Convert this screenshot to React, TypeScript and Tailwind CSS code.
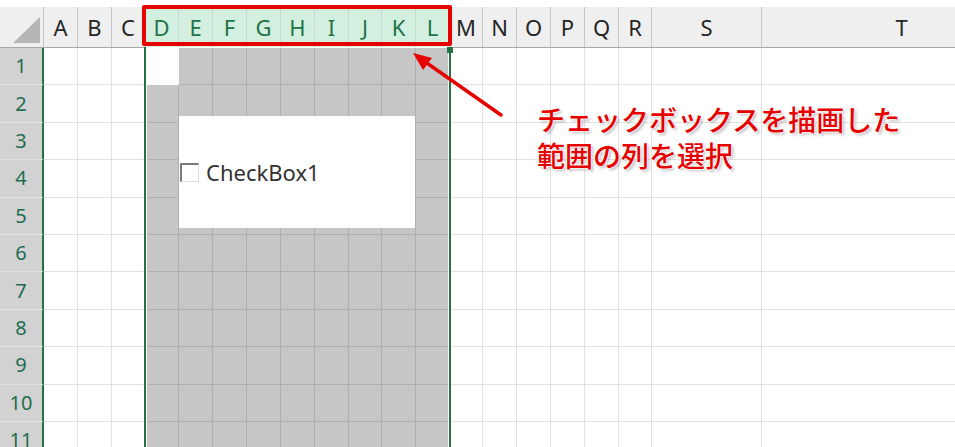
import React from "react";

const COLS: { label: string; w: string; sel: boolean }[] = [
  { label: "A", w: "w-[34px]", sel: false },
  { label: "B", w: "w-[34px]", sel: false },
  { label: "C", w: "w-[33px]", sel: false },
  { label: "D", w: "w-[34px]", sel: true },
  { label: "E", w: "w-[34px]", sel: true },
  { label: "F", w: "w-[34px]", sel: true },
  { label: "G", w: "w-[34px]", sel: true },
  { label: "H", w: "w-[34px]", sel: true },
  { label: "I", w: "w-[34px]", sel: true },
  { label: "J", w: "w-[33px]", sel: true },
  { label: "K", w: "w-[34px]", sel: true },
  { label: "L", w: "w-[34px]", sel: true },
  { label: "M", w: "w-[33px]", sel: false },
  { label: "N", w: "w-[34px]", sel: false },
  { label: "O", w: "w-[34px]", sel: false },
  { label: "P", w: "w-[34px]", sel: false },
  { label: "Q", w: "w-[34px]", sel: false },
  { label: "R", w: "w-[33px]", sel: false },
  { label: "S", w: "w-[110px]", sel: false },
  { label: "T", w: "w-[280px]", sel: false },
];

const ROWS = [1, 2, 3, 4, 5, 6, 7, 8, 9, 10, 11];

export default function App() {
  return (
    <div className="relative w-[955px] h-[447px] overflow-hidden bg-white font-['Noto_Sans','Noto_Sans_CJK_JP',sans-serif]">
      {/* header */}
      <div className="pt-[7px] bg-white">
        <div className="flex h-[41px] border-b border-[#a8a8a8]">
          <div className="w-[44px] shrink-0 bg-[#efefef] border-r border-[#c4c4c4] relative">
            <svg className="absolute left-0 top-0" width="44" height="40" viewBox="0 0 44 40">
              <polygon points="13,36 40,36 40,10" fill="#b5b5b5" />
            </svg>
          </div>
          {COLS.map((c) => (
            <div
              key={c.label}
              className={`${c.w} shrink-0 flex items-center justify-center border-r text-[22px] leading-none ${
                c.sel
                  ? "bg-[#d3efdf] text-[#217346] border-[#c3dccd]"
                  : "bg-[#efefef] text-[#262626] border-[#c8c8c8]"
              }`}
            >
              {c.label}
            </div>
          ))}
        </div>
      </div>

      {/* body rows */}
      {ROWS.map((r) => (
        <div key={r} className="flex h-[37.4px]">
          <div className="w-[44px] shrink-0 bg-[#d2d2d2] border-r-2 border-r-[#217346] border-b border-b-[#e2e2e2] flex items-center justify-center text-[20px] leading-none text-[#1f6d4f]">
            {r}
          </div>
          {COLS.map((c, i) => {
            const active = r === 1 && i === 3;
            const cls = active
              ? "bg-white"
              : c.sel
              ? "bg-[#c6c6c6] border-r border-b border-[#afafaf]"
              : "bg-white border-r border-b border-[#e1e1e1]";
            return <div key={c.label} className={`${c.w} shrink-0 ${cls}`} />;
          })}
        </div>
      ))}

      {/* selection border */}
      <div className="absolute left-[144px] top-[47px] w-[307px] bottom-0 border-l-2 border-r-2 border-[#217346] shadow-[inset_1px_1px_0_#ffffff,inset_-1px_0_0_#ffffff]" />
      <div className="absolute left-[447px] top-[47px] w-[6px] h-[6px] bg-[#217346]" />

      {/* checkbox control */}
      <div className="absolute left-[179px] top-[116px] w-[236px] h-[112px] bg-white flex items-center pl-[1px]">
        <div className="w-[19px] h-[19px] bg-white border-t-2 border-l-2 border-t-[#7a7a7a] border-l-[#7a7a7a] border-b border-r border-b-[#dcdcdc] border-r-[#dcdcdc]" />
        <span className="ml-[7px] text-[22px] leading-none text-[#333333]">CheckBox1</span>
      </div>

      {/* red highlight box */}
      <div className="absolute left-[142px] top-[5px] w-[310px] h-[41px] border-4 border-[#e60000] rounded-[2px]" />

      {/* arrow */}
      <svg className="absolute left-0 top-0 pointer-events-none" width="955" height="447" viewBox="0 0 955 447">
        <line x1="501" y1="115" x2="424" y2="61" stroke="#e60000" strokeWidth="3.5" strokeLinecap="round" />
        <polygon points="413,53 432,58 423,70" fill="#e60000" />
      </svg>

      {/* annotation */}
      <div className="absolute left-[537px] top-[101px] text-[28px] leading-[36px] font-medium text-[#e60000] font-['Noto_Sans_CJK_JP',sans-serif] whitespace-nowrap [text-shadow:0_0_2px_#fff,0_0_2px_#fff,0_0_3px_#fff,2px_2px_3px_rgba(0,0,0,0.3)]">
        <div>チェックボックスを描画した</div>
        <div>範囲の列を選択</div>
      </div>
    </div>
  );
}
